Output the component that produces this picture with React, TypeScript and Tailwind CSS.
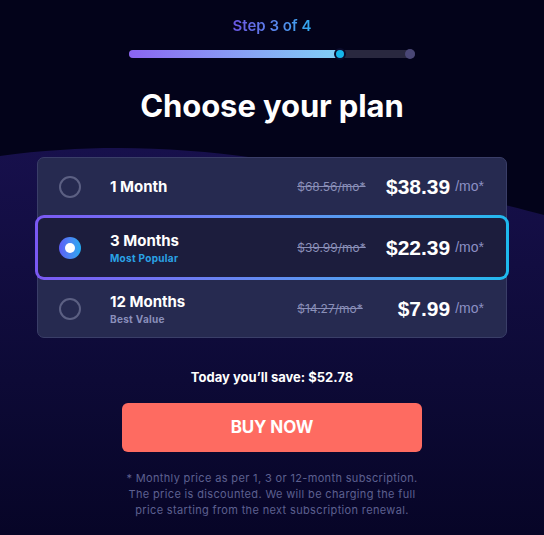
import React, { useState } from 'react';

interface Plan {
  id: string;
  name: string;
  tag?: string;
  oldPrice: string;
  price: string;
}

const plans: Plan[] = [
  { id: '1m', name: '1 Month', oldPrice: '$68.56/mo*', price: '$38.39' },
  { id: '3m', name: '3 Months', tag: 'Most Popular', oldPrice: '$39.99/mo*', price: '$22.39' },
  { id: '12m', name: '12 Months', tag: 'Best Value', oldPrice: '$14.27/mo*', price: '$7.99' },
];

const arial = { fontFamily: '"Liberation Sans", Arial, sans-serif' };

function PlanRow({ plan, selected, onSelect }: { plan: Plan; selected: boolean; onSelect: () => void }) {
  const inner = (
    <div
      onClick={onSelect}
      className={`flex items-center pl-[21px] pr-[22px] cursor-pointer ${
        selected ? 'h-[59px] bg-[#1c1d3d] rounded-[6px]' : 'h-[57px]'
      }`}
    >
      {selected ? (
        <div className="w-[22px] h-[22px] rounded-full bg-gradient-to-r from-[#5b5cf6] to-[#22aaf0] flex items-center justify-center">
          <div className="w-[10px] h-[10px] rounded-full bg-white" />
        </div>
      ) : (
        <div className="w-[22px] h-[22px] rounded-full border-2 border-[#5c6083]" />
      )}
      <div className="flex-1 ml-[29px] flex flex-col">
        <span className="text-[15px] leading-[19px] font-bold text-white">{plan.name}</span>
        {plan.tag && (
          <span
            className={`mt-[1px] text-[10px] leading-[14px] font-bold tracking-[0.3px] ${
              selected ? 'text-[#2aa3e6]' : 'text-[#8a8fbb]'
            }`}
          >
            {plan.tag}
          </span>
        )}
      </div>
      <span className="w-[83px] text-[12px] text-[#8a8fb8] line-through">{plan.oldPrice}</span>
      <span className="w-[70px] text-right text-[21px] font-bold text-white" style={arial}>
        {plan.price}
      </span>
      <span className="ml-[5px] text-[14px] text-[#8c90c4]" style={arial}>
        /mo*
      </span>
    </div>
  );

  if (selected) {
    return (
      <div className="-mx-[3px] rounded-[9px] p-[3px] bg-gradient-to-r from-[#7a58f4] to-[#1cb9ee]">{inner}</div>
    );
  }
  return inner;
}

export default function App() {
  const [selected, setSelected] = useState('3m');

  return (
    <div
      className="relative w-[544px] h-[535px] overflow-hidden bg-[#03031a]"
      style={{ fontFamily: 'Inter, "DejaVu Sans", sans-serif' }}
    >
      {/* background wave */}
      <svg className="absolute inset-0" width="544" height="535" viewBox="0 0 544 535">
        <defs>
          <linearGradient id="wave" x1="0" y1="0" x2="0" y2="1">
            <stop offset="0" stopColor="#17104c" />
            <stop offset="0.6" stopColor="#0d0a36" />
            <stop offset="1" stopColor="#070527" />
          </linearGradient>
        </defs>
        <path d="M0 156 C 120 140, 220 150, 330 170 C 420 186, 490 200, 544 215 L 544 535 L 0 535 Z" fill="url(#wave)" />
      </svg>

      <div className="relative flex flex-col items-center pt-[16px]">
        <div className="text-[15px] leading-[20px] font-semibold bg-gradient-to-r from-[#6a56e4] to-[#2ea8ee] bg-clip-text text-transparent">
          Step 3 of 4
        </div>

        {/* progress */}
        <div className="relative mt-[14px] w-[286px] h-[8px] rounded-full bg-[#29283f]">
          <div className="absolute left-0 top-0 h-[8px] w-[213px] rounded-full bg-gradient-to-r from-[#8a64f0] to-[#7fd0f6]" />
          <div className="absolute left-[205px] top-[-2px] w-[12px] h-[12px] rounded-full bg-[#16b6ea] border-2 border-[#0b0c2c]" />
          <div className="absolute right-0 top-[-1px] w-[10px] h-[10px] rounded-full bg-[#4a4776]" />
        </div>

        <h1 className="mt-[30px] text-[31px] leading-[36px] font-bold text-white tracking-[-0.1px]">
          Choose your plan
        </h1>

        <div className="mt-[33px] w-[470px] rounded-[7px] bg-[#262a50] border border-[#3a3e68]">
          {plans.map((p) => (
            <PlanRow key={p.id} plan={p} selected={selected === p.id} onSelect={() => setSelected(p.id)} />
          ))}
        </div>

        <div className="mt-[30px] text-[13px] leading-[18px] font-bold text-white">Today you’ll save: $52.78</div>

        <button className="mt-[17px] w-[300px] h-[49px] rounded-[6px] bg-[#fe6b61] text-white text-[17px] font-bold tracking-[-0.1px]">
          BUY NOW
        </button>

        <p className="mt-[18px] text-center text-[11px] leading-[16px] text-[#5d6090] tracking-[0.35px]">
          * Monthly price as per 1, 3 or 12-month subscription.
          <br />
          The price is discounted. We will be charging the full
          <br />
          price starting from the next subscription renewal.
        </p>
      </div>
    </div>
  );
}
